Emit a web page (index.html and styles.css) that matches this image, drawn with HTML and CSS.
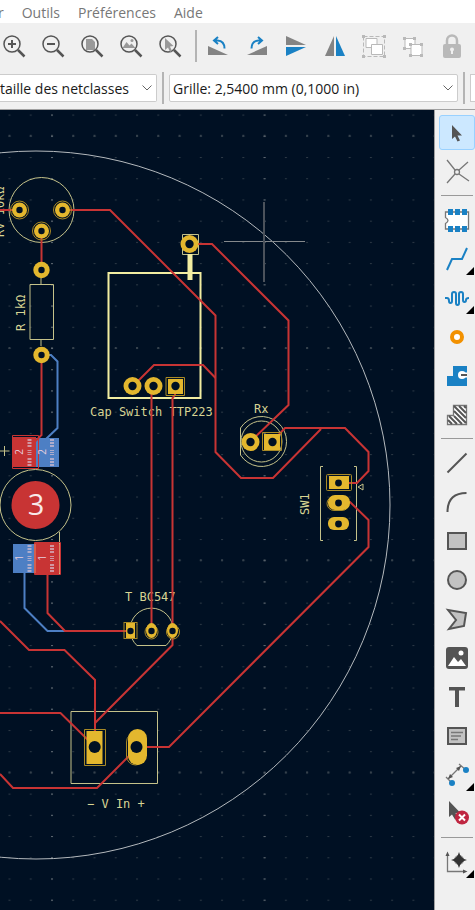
FILE: index.html
```
<!DOCTYPE html>
<html lang="fr">
<head>
    <meta charset="UTF-8">
    <meta name="viewport" content="width=device-width, initial-scale=1.0">
    <title>Éditeur de PCB</title>
    <link rel="stylesheet" href="styles.css">
</head>
<body>

    <!-- Menu -->
    <nav class="menubar">
        <a href="#">r</a>
        <a href="#">Outils</a>
        <a href="#">Préférences</a>
        <a href="#">Aide</a>
    </nav>

    <!-- Main toolbar -->
    <div class="toolbar">
        <div class="tool-group">
            <button class="tool" aria-label="Zoom avant">
                <svg viewBox="0 0 28 28"><g class="lens"><circle cx="12" cy="12" r="8"/><path class="handle" d="M18 18l6.500 6.500"/></g><path class="dark-line" d="M8 12h8M12 8v8"/></svg>
            </button>
            <button class="tool" aria-label="Zoom arrière">
                <svg viewBox="0 0 28 28"><g class="lens"><circle cx="12" cy="12" r="8"/><path class="handle" d="M18 18l6.500 6.500"/></g><path class="dark-line" d="M8 12h8"/></svg>
            </button>
            <button class="tool" aria-label="Zoom page">
                <svg viewBox="0 0 28 28"><path class="mid" d="M8 7h6l3 3v8H8z"/><g class="lens"><circle cx="12" cy="12" r="8"/><path class="handle" d="M18 18l6.500 6.500"/></g></svg>
            </button>
            <button class="tool" aria-label="Zoom objets">
                <svg viewBox="0 0 28 28"><path class="mid" d="M5.500 16l4-6 3 3.500 2-2 4 4.500z"/><circle class="mid" cx="15" cy="8.500" r="1.500"/><g class="lens"><circle cx="12" cy="12" r="8"/><path class="handle" d="M18 18l6.500 6.500"/></g></svg>
            </button>
            <button class="tool" aria-label="Zoom sélection">
                <svg viewBox="0 0 28 28"><g class="lens"><circle cx="12" cy="12" r="8"/><path class="handle" d="M18 18l6.500 6.500"/></g><path class="mid" d="M9 6v12l3-2.500 2 4.500 2-1-2-4.500 3.500-.5z"/></svg>
            </button>
        </div>
        <div class="tool-sep"></div>
        <div class="tool-group">
            <button class="tool" aria-label="Rotation gauche">
                <svg viewBox="0 0 28 28"><path class="gray" d="M4 14l20 9H4z"/><path class="blue-line" d="M14 5l-4 3.500 4 3.500M10.500 8.500h3q7 .5 7 8"/></svg>
            </button>
            <button class="tool" aria-label="Rotation droite">
                <svg viewBox="0 0 28 28"><path class="gray" d="M24 14L4 23h20z"/><path class="blue-line" d="M15 5l4 3.500-4 3.500M18.500 8.500h-3q-7 .5-7 8"/></svg>
            </button>
            <button class="tool" aria-label="Miroir vertical">
                <svg viewBox="0 0 28 28"><path class="gray" d="M4 4l20 9H4z"/><path class="blue" d="M4 15h20L4 24z"/></svg>
            </button>
            <button class="tool" aria-label="Miroir horizontal">
                <svg viewBox="0 0 28 28"><path class="gray" d="M13 4v20H4z"/><path class="blue" d="M15 4l9 20h-9z"/></svg>
            </button>
            <button class="tool" aria-label="Grouper">
                <svg viewBox="0 0 28 28"><path class="pale-dash" d="M3.500 4.500h21v20h-21z"/><g class="pale-box"><path d="M6 6.500h11v9H6z"/><path d="M11.500 12.500h11v10h-11z"/></g><path class="pale" d="M2 3h3v3H2zM23 3h3v3h-3zM2 23h3v3H2zM23 23h3v3h-3z"/></svg>
            </button>
            <button class="tool" aria-label="Dégrouper">
                <svg viewBox="0 0 28 28"><g class="pale-box"><path d="M6 6.500h10v10H6z"/><path d="M12 12.500h11v11H12z"/></g><path class="pale" d="M4 5h3v3H4zM14 5h3v3h-3zM4 15h3v3H4zM10 11h3v3h-3zM21 11h3v3h-3zM10 22h3v3h-3zM21 22h3v3h-3z"/></svg>
            </button>
            <button class="tool" aria-label="Verrouiller">
                <svg viewBox="0 0 28 28"><path class="shackle" d="M9 13V8.500a5 5 0 0110 0V13"/><rect class="pale" x="5" y="12" width="18" height="14" rx="2"/><path class="light" d="M12 17.500a2 2 0 114 0q0 1-1 1.500v3h-2v-3q-1-.5-1-1.500"/></svg>
            </button>
        </div>
    </div>

    <!-- Track width and grid selectors -->
    <div class="options">
        <div class="combo combo-track">
            <select aria-label="Largeur de piste">
                <option>taille des netclasses</option>
            </select>
            <svg class="chevron" viewBox="0 0 10 6"><path d="M.5.500L5 5 9.500.500"/></svg>
        </div>
        <div class="tool-sep"></div>
        <div class="combo combo-grid">
            <select aria-label="Grille">
                <option>Grille: 2,5400 mm (0,1000 in)</option>
            </select>
            <svg class="chevron" viewBox="0 0 10 6"><path d="M.5.500L5 5 9.500.500"/></svg>
        </div>
        <div class="tool-sep"></div>
        <div class="combo-next"></div>
    </div>

    <div class="workspace">
        <!-- Board -->
        <svg class="board" viewBox="0 110 434 800" preserveAspectRatio="xMinYMin slice">
            <defs>
                <pattern id="grid" x="51" y="348" width="21.260" height="21.220" patternUnits="userSpaceOnUse">
                    <path d="M0 0h2v1H0z" fill="#2d3945"/>
                </pattern>
                <pattern id="grid-col" x="51" y="348" width="212.600" height="21.220" patternUnits="userSpaceOnUse">
                    <path d="M0 0h2v1H0z" fill="#5c6670"/>
                </pattern>
                <pattern id="grid-row" x="51" y="347" width="21.260" height="212.200" patternUnits="userSpaceOnUse">
                    <path d="M0 0h2v2H0z" fill="#35414c"/>
                </pattern>
            </defs>
            <rect y="110" width="434" height="800" fill="url(#grid)"/>
            <rect y="110" width="434" height="800" fill="url(#grid-row)"/>
            <rect y="110" width="434" height="800" fill="url(#grid-col)"/>

            <!-- Board outline -->
            <circle class="edge" cx="36" cy="505" r="354"/>

            <!-- Back copper -->
            <g class="track-back">
                <path d="M41 355h10l6.500 6.500V428L46 439"/>
                <path d="M24.500 573v35l23 23H66"/>
            </g>
            <path class="pad-back" d="M36 438h23v29H36zM13 544h22v29H13z"/>
            <path class="pad-front" d="M13 437h23v30H13zM35 543h25v31H35z"/>

            <!-- Front silkscreen -->
            <g class="silk">
                <circle cx="41.500" cy="210" r="32.500"/>
                <path d="M30 284.500h23.500v55H30zM41 278v6M41 340v6"/>
                <path d="M182.500 234.500h16v20h-16z"/>
                <circle cx="35.500" cy="505" r="35.500"/>
                <path d="M59.500 532v42M4.500 446v10M0 451h9.500"/>
                <path d="M137 645.500a21.500 21.500 0 1129 0z"/>
                <path d="M71 711.500h86.500v72H71z"/>
                <path d="M240.500 428a25 25 0 110 27z"/>
                <circle cx="261.500" cy="441.500" r="20.500"/>
                <path d="M323 466.500h-2.500v74h2.500M354 466.500h2.500v74H354M363 484v6l-5-3z"/>
            </g>
            <g class="silk-bold">
                <path d="M108.500 273h92v125h-92z"/>
                <path class="antenna" d="M190 254v26"/>
            </g>
            <g class="silk-text">
                <text transform="translate(4 237) rotate(-90)">RV 10kΩ</text>
                <text transform="translate(25 331) rotate(-90)">R 1kΩ</text>
                <text x="90" y="416">Cap Switch TTP223</text>
                <text x="254" y="413">Rx</text>
                <text transform="translate(309 515) rotate(-90)">SW1</text>
                <text x="125" y="601">T BC547</text>
                <text x="87" y="808">− V In +</text>
            </g>

            <!-- Front copper -->
            <g class="track-front">
                <path d="M0 210h20M62 210h48l105.500 105.500V452L241 478h32l48-49"/>
                <path d="M190 244h22l76.500 76.500V405L250 442"/>
                <path d="M133 386l21-21h49l12.500 13"/>
                <path d="M151.500 386v245M175 386v9l-2.500 3v247L95 723"/>
                <path d="M41.500 231v39M41.500 355v80l-6 6"/>
                <path d="M47.500 574v39l17.500 18h66"/>
                <path d="M0 621l29 29h35.500L95 680v66M0 713h60.500L90 742M0 774l13 14h84l35-35"/>
                <path d="M137 747h32l199.500-200v-27L350 502h-11"/>
                <path d="M272 442l13-14h60l23.500 24v19L357 483h-18"/>
                <path class="outline" d="M12.500 435.500h26v33h-26zM34.500 542.500h26v32h-26z"/>
            </g>
            <path class="overlap" d="M35 544v29M59.500 544v29"/>

            <!-- Pads -->
            <g class="pad-ring">
                <circle cx="19.500" cy="210" r="9"/>
                <circle cx="62.500" cy="210" r="9"/>
                <circle cx="41.500" cy="231" r="9"/>
                <path d="M166 377.500h18.500v18H166zM262.500 432.500h19v18h-19z"/>
                <rect x="326.500" y="474.500" width="25" height="16" rx="1"/>
                <rect x="327" y="496.500" width="22" height="14" rx="7"/>
                <rect x="124" y="622.500" width="13" height="16"/>
                <ellipse cx="151.500" cy="632" rx="6.500" ry="7"/>
                <ellipse cx="173" cy="632" rx="6.500" ry="7"/>
                <path d="M84.500 729.500h21v36h-21z"/>
                <rect x="126.500" y="733" width="18" height="32" rx="9"/>
            </g>
            <g class="pad">
                <circle cx="19.500" cy="210" r="7.500"/>
                <circle cx="62.500" cy="210" r="7.500"/>
                <circle cx="41.500" cy="231" r="7.500"/>
                <circle cx="41.500" cy="270" r="8.200"/>
                <circle cx="41.500" cy="355" r="8.200"/>
                <circle cx="189.500" cy="244" r="9"/>
                <circle cx="132.500" cy="386" r="9"/>
                <circle cx="153.500" cy="386" r="9"/>
                <rect x="168" y="379" width="15" height="15"/>
                <circle cx="250.500" cy="442" r="9"/>
                <rect x="264" y="434" width="16" height="16"/>
                <rect x="329" y="476" width="20" height="13"/>
                <rect x="328" y="495" width="22" height="15" rx="7"/>
                <rect x="328" y="517" width="21" height="13" rx="6"/>
                <rect x="126" y="623" width="9" height="15"/>
                <ellipse cx="151.500" cy="630.500" rx="5.500" ry="7.500"/>
                <ellipse cx="172.500" cy="630.500" rx="5.500" ry="7.500"/>
                <rect x="86.500" y="731" width="16" height="33"/>
                <rect x="128" y="729" width="19" height="36" rx="9.500"/>
            </g>
            <g class="hole">
                <circle cx="19.500" cy="210" r="3.200"/>
                <circle cx="62.500" cy="210" r="3.200"/>
                <circle cx="41.500" cy="231" r="3.200"/>
                <circle cx="41.500" cy="270" r="3.200"/>
                <circle cx="41.500" cy="355" r="3.200"/>
                <circle cx="189.500" cy="244" r="4.200"/>
                <circle cx="132.500" cy="386" r="4.200"/>
                <circle cx="153.500" cy="386" r="4.200"/>
                <circle cx="175.500" cy="386" r="4.200"/>
                <circle cx="250.500" cy="442" r="4.200"/>
                <circle cx="272.500" cy="442" r="4.200"/>
                <circle cx="338.500" cy="483" r="3.400"/>
                <circle cx="338.500" cy="503" r="3.400"/>
                <circle cx="338.500" cy="524" r="3.400"/>
                <circle cx="130.500" cy="631" r="3.200"/>
                <circle cx="151.500" cy="631" r="3.200"/>
                <circle cx="172.500" cy="631" r="3.200"/>
                <circle cx="94.700" cy="747" r="6"/>
                <circle cx="136.500" cy="747" r="6"/>
            </g>

            <!-- Pad numbers -->
            <circle class="pad-front" cx="35.500" cy="505" r="24"/>
            <text class="pad-name" x="36" y="515">3</text>
            <g class="pad-label">
                <text transform="translate(23 452) rotate(-90)">2</text>
                <text transform="translate(46 452) rotate(-90)">2</text>
                <text transform="translate(23 558) rotate(-90)">1</text>
                <text transform="translate(46 558) rotate(-90)">1</text>
            </g>
            <path class="pad-net" d="M29.500 439v27M52 439v27M29.500 545v27M52 545v27"/>

            <!-- Cursor -->
            <path class="cursor" d="M224 241.500h81"/>
            <path class="cursor cursor-v" d="M264 202v80"/>
        </svg>

        <!-- Drawing tools -->
        <div class="sidebar">
            <div class="side-group">
                <button class="side-tool active" aria-label="Sélection">
                    <svg viewBox="0 0 28 28"><path class="dark" d="M9 6v14l3-2.500 2.500 5 2.500-1-2.500-5H19z"/></svg>
                </button>
                <button class="side-tool" aria-label="Chevelu local">
                    <svg viewBox="0 0 28 28"><path class="thin" d="M4 2l8 10M25 4l-9 8M4 25l8-9M26 23l-10-7"/><circle class="thin" cx="14" cy="14" r="2.500"/></svg>
                </button>
            </div>
            <div class="side-sep"></div>
            <div class="side-group">
                <button class="side-tool" aria-label="Ajouter empreinte">
                    <svg viewBox="0 0 28 28"><path class="thin fill-white" d="M2.500 6h23v17h-23v-5.500q5-3 0-6z"/><path class="blue" d="M5 3h5v6H5zM12 3h5v6h-5zM19 3h5v6h-5zM5 20h5v6H5zM12 20h5v6h-5zM19 20h5v6h-5z"/></svg>
                </button>
                <button class="side-tool more" aria-label="Router piste">
                    <svg viewBox="0 0 28 28"><path class="blue-line" d="M4 25l5-11h10l5-11"/></svg>
                </button>
                <button class="side-tool more" aria-label="Ajuster longueur">
                    <svg viewBox="0 0 28 28"><path class="blue-line" d="M2 14h2q2 0 2 3 0 2 1.500 2t1.500-2V10q0-2 2-2t2 2v9q0 2 1.500 2t1.500-2v-9q0-2 2-2t2 2v6q0 2 1.500 2t1.500-2q0-2 3-2"/></svg>
                </button>
                <button class="side-tool" aria-label="Ajouter via">
                    <svg viewBox="0 0 28 28"><circle class="via" cx="14" cy="14" r="5"/></svg>
                </button>
                <button class="side-tool" aria-label="Ajouter zone">
                    <svg viewBox="0 0 28 28"><path class="blue" d="M10 4h14v20H4V14h6z"/><circle class="fill-white" cx="19" cy="13" r="4"/><path class="fill-white" d="M19 10.500h5v5h-5z"/><path class="dark-line" d="M18 13h6"/></svg>
                </button>
                <button class="side-tool" aria-label="Zone interdite">
                    <svg viewBox="0 0 28 28"><path class="thin fill-white" d="M10.500 4.500h13v19h-19v-9h6z"/><path class="dark-line" d="M5 19l4 4M6 15l8 8M11 15l8 8M11 10l12 12M11 5l12 12M16 5l7 7M21 5l2 2"/></svg>
                </button>
            </div>
            <div class="side-sep"></div>
            <div class="side-group">
                <button class="side-tool" aria-label="Ligne">
                    <svg viewBox="0 0 28 28"><path class="dark-line" d="M4.500 23.500l19-19"/></svg>
                </button>
                <button class="side-tool" aria-label="Arc">
                    <svg viewBox="0 0 28 28"><path class="dark-line" d="M4.500 24q0-19 19-19"/></svg>
                </button>
                <button class="side-tool" aria-label="Rectangle">
                    <svg viewBox="0 0 28 28"><path class="shape" d="M5 6h18v16H5z"/></svg>
                </button>
                <button class="side-tool" aria-label="Cercle">
                    <svg viewBox="0 0 28 28"><circle class="shape" cx="14" cy="14" r="9"/></svg>
                </button>
                <button class="side-tool" aria-label="Polygone">
                    <svg viewBox="0 0 28 28"><path class="shape" d="M5 5l18 3-2 13-15 3 7-9z"/></svg>
                </button>
                <button class="side-tool" aria-label="Image">
                    <svg viewBox="0 0 28 28"><rect class="dark" x="3" y="3" width="22" height="22" rx="3"/><path class="fill-white" d="M5 22l6-9 4 5 3-3 5 7z"/><circle class="fill-white" cx="18" cy="9" r="2.500"/></svg>
                </button>
                <button class="side-tool" aria-label="Texte">
                    <svg viewBox="0 0 28 28"><path class="dark" d="M6 4h16v3.500h-6V24h-4V7.500H6z"/></svg>
                </button>
                <button class="side-tool" aria-label="Zone de texte">
                    <svg viewBox="0 0 28 28"><path class="shape" d="M5 6h18v16H5z"/><path class="thin" d="M8 10.500h12M8 14h10M8 17.500h7"/></svg>
                </button>
                <button class="side-tool more" aria-label="Cote">
                    <svg viewBox="0 0 28 28"><path class="thin" d="M3 16l6 6M16 3l7 6M5 18L18 5"/><path class="dark" d="M5 18l2-5 3 3zM18 5l-5 2 3 3z"/><circle class="blue" cx="9" cy="22" r="3"/><circle class="blue" cx="23" cy="9" r="3"/></svg>
                </button>
                <button class="side-tool" aria-label="Supprimer">
                    <svg viewBox="0 0 28 28"><path class="dark" d="M6 1v16l3-2.500 3 5 3-2-2.500-4.500h5z"/><circle class="red" cx="19" cy="17.500" r="7"/><path class="white-line" d="M16 14.500l6 6M22 14.500l-6 6"/></svg>
                </button>
            </div>
            <div class="side-sep"></div>
            <div class="side-group">
                <button class="side-tool more" aria-label="Origine">
                    <svg viewBox="0 0 28 28"><path class="thin" d="M4.500 7v16.500H22"/><path class="dark" d="M2.500 8l2-4.500 2 4.500zM20 21.500l4.500 2-4.500 2z"/><circle class="mid" cx="16" cy="12" r="5"/><path class="origin" d="M16 4q1.500 6.500 8 8-6.500 1.500-8 8-1.500-6.500-8-8 6.500-1.500 8-8z"/></svg>
                </button>
            </div>
        </div>
    </div>

</body>
</html>
```
FILE: styles.css
```
* {
    box-sizing: border-box;
}

body {
    margin: 0;
    min-height: 100vh;
    display: flex;
    flex-direction: column;
    overflow-x: hidden;
    background-color: #f0f0f0;
    font-family: 'Open Sans', 'Noto Sans', sans-serif;
    color: #1a1a1a;
}

button {
    padding: 0;
    border: 1px solid transparent;
    background: none;
}

/* Menu */
.menubar {
    display: flex;
    gap: 18px;
    height: 23px;
    padding-top: 4px;
    background-color: #fff;
    font-size: 14px;
    line-height: 18px;
}

.menubar a {
    color: #777;
    text-decoration: none;
}

.menubar a:first-child {
    margin-left: -2px;
}

/* Main toolbar */
.toolbar {
    display: flex;
    align-items: center;
    height: 46px;
}

.tool-group {
    display: flex;
    gap: 11px;
}

.tool {
    flex: none;
    width: 28px;
    height: 28px;
    border: none;
}

.tool svg,
.side-tool svg {
    display: block;
    width: 28px;
    height: 28px;
}

.tool-sep {
    flex: none;
    width: 2px;
    height: 32px;
    background-color: #b4b4b4;
}

.toolbar .tool-sep {
    margin: 0 7px 0 11px;
}

/* Selectors */
.options {
    display: flex;
    align-items: center;
    gap: 5px;
    height: 41px;
    padding-bottom: 2px;
    border-bottom: 1px solid #a0a0a0;
}

.combo {
    position: relative;
    height: 28px;
}

.combo-track {
    flex: none;
    width: 157px;
}

.combo-grid {
    flex: 1;
}

.combo select {
    width: 100%;
    height: 28px;
    padding: 0 24px 0 3px;
    border: 1px solid #ccc;
    border-radius: 2px;
    background-color: #fff;
    font-family: inherit;
    font-size: 14px;
    color: #1a1a1a;
    appearance: none;
}

.combo-track select {
    padding-left: 0;
    border-left: none;
    border-radius: 0 2px 2px 0;
}

.combo-next {
    flex: none;
    width: 5px;
    height: 28px;
    border: 1px solid #ccc;
    border-right: none;
    background-color: #fff;
}

.chevron {
    position: absolute;
    top: 11px;
    right: 5px;
    width: 10px;
    height: 6px;
    fill: none;
    stroke: #666;
    pointer-events: none;
}

/* Workspace */
.workspace {
    flex: 1;
    display: flex;
}

.board {
    flex: 1;
    min-width: 0;
    height: 800px;
    border-right: 1px solid #a0a0a0;
    background-color: #001023;
}

.edge {
    fill: none;
    stroke: #b4b9bd;
}

.track-front,
.track-back,
.silk,
.silk-bold,
.pad-ring {
    fill: none;
}

.track-front {
    stroke: #c83434;
    stroke-width: 2;
}

.track-front .outline {
    stroke-width: 1;
}

.track-back {
    stroke: #4d7fc4;
    stroke-width: 2;
}

.pad-front {
    fill: #c83434;
}

.pad-back {
    fill: #4d7fc4;
}

.overlap {
    stroke: #dd8a68;
}

.silk {
    stroke: #c5c28a;
}

.silk-bold {
    stroke: #f2eda1;
    stroke-width: 2;
}

.silk-bold .antenna {
    stroke-width: 5;
}

.silk-text {
    fill: #d8d493;
    font-family: 'DejaVu Sans Mono', monospace;
    font-size: 12px;
}

.pad {
    fill: #e3b72e;
}

.pad-ring {
    stroke: #a98a26;
}

.hole {
    fill: #001023;
}

.pad-name {
    fill: #f8e9e9;
    font-size: 29px;
    text-anchor: middle;
}

.pad-label text {
    fill: #e6cfdc;
    font-size: 10px;
    text-anchor: middle;
}

.pad-net {
    fill: none;
    stroke: #d5bfd0;
    stroke-width: 4;
    stroke-dasharray: 2 1 2 1 2 3 1 1 1 1 1 3 2 1 2 1 2;
    opacity: 0.7;
}

.cursor {
    stroke: #85898c;
}

.cursor-v {
    stroke: #4b525b;
    stroke-width: 2;
}

/* Drawing tools */
.sidebar {
    flex: none;
    width: 40px;
    padding: 5px 0 0 4px;
}

.side-group {
    display: flex;
    flex-direction: column;
    gap: 4px;
}

.side-tool {
    position: relative;
    display: flex;
    align-items: center;
    justify-content: center;
    height: 35px;
}

.side-tool.active {
    border-color: #99d1ff;
    border-radius: 3px;
    background-color: #cce8ff;
}

.side-tool.more::after {
    content: '';
    position: absolute;
    right: 0;
    bottom: 0;
    border-bottom: 8px solid #000;
    border-left: 8px solid transparent;
}

.side-sep {
    height: 1px;
    margin: 6px 2px;
    background-color: #999;
}

/* Icons */
.lens,
.thin,
.dark-line,
.blue-line,
.white-line,
.via,
.shackle,
.pale-dash {
    fill: none;
}

.lens {
    stroke: #555;
    stroke-width: 1.5;
}

.handle {
    stroke-width: 2.5;
}

.dark-line {
    stroke: #555;
    stroke-width: 2;
}

.thin {
    stroke: #777;
    stroke-width: 1.3;
}

.blue-line {
    stroke: #1a81c4;
    stroke-width: 2;
}

.white-line {
    stroke: #fff;
    stroke-width: 2;
}

.shape {
    fill: #c2c2c2;
    stroke: #555;
    stroke-width: 2;
}

.via {
    fill: #fff;
    stroke: #f29100;
    stroke-width: 4;
}

.shackle {
    stroke: #b9b9b9;
    stroke-width: 2.5;
}

.pale-dash {
    stroke: #b9b9b9;
    stroke-dasharray: 4 2;
}

.pale-box {
    fill: #fff;
    stroke: #b9b9b9;
}

.dark {
    fill: #545454;
}

.gray {
    fill: #848484;
}

.mid {
    fill: #999;
}

.pale {
    fill: #b9b9b9;
}

.light {
    fill: #f0f0f0;
}

.blue {
    fill: #1a81c4;
}

.red {
    fill: #bf2641;
}

.origin {
    fill: #333;
}

.fill-white {
    fill: #fff;
}
```
